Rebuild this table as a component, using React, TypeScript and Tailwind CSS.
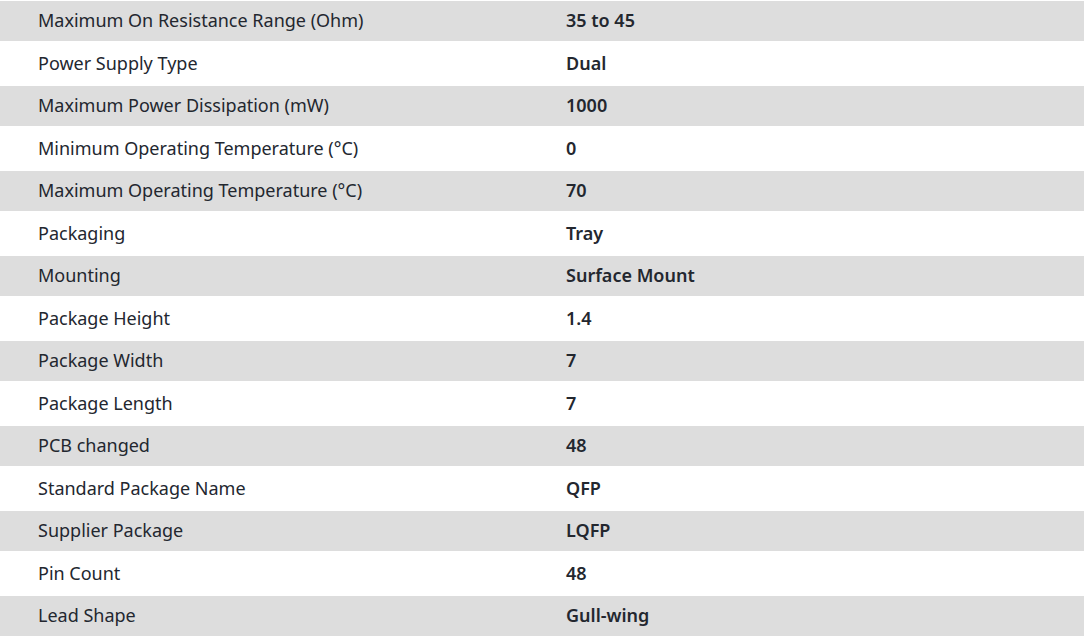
import React from "react";

const rows: [string, string][] = [
  ["Maximum On Resistance Range (Ohm)", "35 to 45"],
  ["Power Supply Type", "Dual"],
  ["Maximum Power Dissipation (mW)", "1000"],
  ["Minimum Operating Temperature (°C)", "0"],
  ["Maximum Operating Temperature (°C)", "70"],
  ["Packaging", "Tray"],
  ["Mounting", "Surface Mount"],
  ["Package Height", "1.4"],
  ["Package Width", "7"],
  ["Package Length", "7"],
  ["PCB changed", "48"],
  ["Standard Package Name", "QFP"],
  ["Supplier Package", "LQFP"],
  ["Pin Count", "48"],
  ["Lead Shape", "Gull-wing"],
];

export default function App() {
  return (
    <div
      className="w-[1085px] h-[638px] bg-white pt-[1px] pr-[1px] text-[18px] leading-[24px] text-[#23272f]"
      style={{ fontFamily: '"Noto Sans", "Open Sans", sans-serif' }}
    >
      {rows.map(([k, v], i) => (
        <div
          key={i}
          className={
            "flex items-center pb-[2px] " +
            (i % 2 === 0 ? "h-[40px] bg-[#dddddd]" : "h-[45px] bg-white")
          }
        >
          <div className="w-[566px] pl-[38px]">{k}</div>
          <div className="font-semibold">{v}</div>
        </div>
      ))}
    </div>
  );
}
